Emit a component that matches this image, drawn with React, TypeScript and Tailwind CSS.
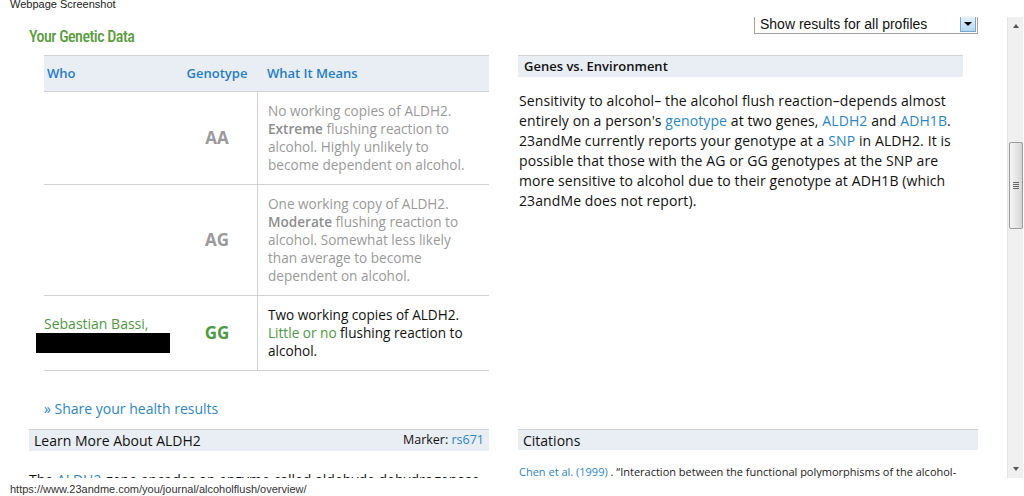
import React from "react";

const body = { fontFamily: '"Open Sans", "Noto Sans", sans-serif' };
const arial = { fontFamily: '"Liberation Sans", Arial, sans-serif' };

const Scrollbar = () => {
  return (
    <div className="w-[16px] mr-[1px] h-full bg-[#f0f0f0] border-l border-[#e4e4e4] flex flex-col items-center">
      <div className="h-[18px] flex items-center justify-center">
        <div className="w-0 h-0 border-l-[3px] border-r-[3px] border-b-[4px] border-l-transparent border-r-transparent border-b-[#555]" />
      </div>
      <div className="h-[107px]" />
      <div className="w-[14px] h-[87px] rounded-[2px] border border-[#9a9a9a] bg-gradient-to-r from-[#f6f6f6] to-[#d6d6d6] flex flex-col items-center justify-center gap-[1px]">
        <div className="w-[6px] h-[1px] bg-[#666]" />
        <div className="w-[6px] h-[1px] bg-[#666]" />
        <div className="w-[6px] h-[1px] bg-[#666]" />
        <div className="w-[6px] h-[1px] bg-[#666]" />
      </div>
      <div className="flex-1" />
      <div className="h-[18px] flex items-center justify-center">
        <div className="w-0 h-0 border-l-[3px] border-r-[3px] border-t-[4px] border-l-transparent border-r-transparent border-t-[#555]" />
      </div>
    </div>
  );
};

const Row = ({
  who,
  genotype,
  genoClass,
  children,
}: {
  who?: React.ReactNode;
  genotype: string;
  genoClass: string;
  children: React.ReactNode;
}) => {
  return (
    <div className="flex border-b border-[#d2d2d2]">
      <div className="w-[133px] flex flex-col justify-center">{who}</div>
      <div className={"w-[80px] flex items-center justify-center text-[17px] font-bold " + genoClass}>
        {genotype}
      </div>
      <div className="flex-1 border-l border-[#d2d2d2] pl-[10px] py-[10px] text-[13.6px] leading-[18px] whitespace-nowrap">
        {children}
      </div>
    </div>
  );
};

const App = () => {
  return (
    <div className="w-[1024px] h-[496px] overflow-hidden bg-white flex flex-col" style={body}>
      <div className="h-[17px] pl-[10px] text-[11px] leading-[10px] -mt-[1px] text-[#222]" style={arial}>
        Webpage Screenshot
      </div>

      <div className="h-[461px] mt-[1px] flex">
        <div className="flex-1 overflow-hidden pl-[29px]">
          <div className="grid grid-cols-[460px_460px] gap-x-[29px]">
            <div>
              <div
                className="pt-[10px] text-[16px] font-medium leading-[20px] text-[#5a9e3e] tracking-[-0.5px]"
                style={{ fontFamily: '"Liberation Sans Narrow", "Roboto", sans-serif', fontStretch: "condensed" }}
              >
                Your Genetic Data
              </div>

              <div className="mt-[8px] ml-[15px] w-[445px]">
                <div className="flex h-[37px] items-center bg-[#e9edf4] border-t border-b border-[#d2d2d2] text-[13px] font-semibold text-[#1f7ec9]">
                  <div className="w-[133px] pl-[3px]">Who</div>
                  <div className="w-[80px] text-center">Genotype</div>
                  <div className="flex-1 pl-[10px]">What It Means</div>
                </div>

                <Row genotype="AA" genoClass="text-[#9a9a9a]">
                  <div className="text-[#9a9a9a]">
                    No working copies of ALDH2.
                    <br />
                    <span className="font-semibold text-[#8e8e8e]">Extreme</span> flushing reaction to
                    <br />
                    alcohol. Highly unlikely to
                    <br />
                    become dependent on alcohol.
                  </div>
                </Row>

                <Row genotype="AG" genoClass="text-[#9a9a9a]">
                  <div className="text-[#9a9a9a]">
                    One working copy of ALDH2.
                    <br />
                    <span className="font-semibold text-[#8e8e8e]">Moderate</span> flushing reaction to
                    <br />
                    alcohol. Somewhat less likely
                    <br />
                    than average to become
                    <br />
                    dependent on alcohol.
                  </div>
                </Row>

                <Row
                  genotype="GG"
                  genoClass="text-[#4e9a42]"
                  who={
                    <div>
                      <div className="text-[14px] leading-[18px] text-[#4e9a42] pt-[2px]">Sebastian Bassi,</div>
                      <div className="-ml-[8px] w-[134px] h-[20px] bg-black" />
                    </div>
                  }
                >
                  <div className="text-[#111]">
                    Two working copies of ALDH2.
                    <br />
                    <span className="text-[#4e9a42]">Little or no</span> flushing reaction to
                    <br />
                    alcohol.
                  </div>
                </Row>
              </div>

              <div className="mt-[29px] ml-[15px] text-[14px] leading-[18px] text-[#2b86c9]">
                » Share your health results
              </div>
            </div>

            <div>
              <div className="-mt-[5px] ml-[236px] h-[22px] border border-[#a3a3a3] flex items-center pt-[2px] pl-[5px] pr-[1px]" style={arial}>
                <div className="flex-1 text-[14px] text-[#111] leading-[18px]">Show results for all profiles</div>
                <div className="w-[16px] h-[16px] border border-[#7aa7cf] bg-gradient-to-b from-[#e4f1fb] to-[#b7d7f0] flex items-center justify-center">
                  <div className="w-0 h-0 border-l-[4px] border-r-[4px] border-t-[4px] border-l-transparent border-r-transparent border-t-black" />
                </div>
              </div>

              <div className="mt-[21px] w-[445px] h-[22px] border-t border-[#d2d2d2] bg-[#e9edf4] pl-[6px] flex items-center text-[13px] font-semibold text-[#111]">
                Genes vs. Environment
              </div>

              <div className="mt-[14px] pl-[1px] text-[14px] leading-[20px] text-[#111] whitespace-nowrap tracking-[0.1px]">
                Sensitivity to alcohol– the alcohol flush reaction–depends almost
                <br />
                entirely on a person's <span className="text-[#2b86c9]">genotype</span> at two genes,{" "}
                <span className="text-[#2b86c9]">ALDH2</span> and <span className="text-[#2b86c9]">ADH1B</span>.
                <br />
                23andMe currently reports your genotype at a <span className="text-[#2b86c9]">SNP</span> in ALDH2. It is
                <br />
                possible that those with the AG or GG genotypes at the SNP are
                <br />
                more sensitive to alcohol due to their genotype at ADH1B (which
                <br />
                23andMe does not report).
              </div>
            </div>
          </div>

          <div className="mt-[11px] grid grid-cols-[460px_460px] gap-x-[29px]">
            <div>
              <div className="h-[22px] border-t border-[#d2d2d2] bg-[#e9edf4] px-[5px] flex items-center justify-between text-[#111]">
                <span className="text-[14px] font-medium">Learn More About ALDH2</span>
                <span className="text-[12.5px]">
                  Marker: <span className="text-[#2b86c9]">rs671</span>
                </span>
              </div>
              <div className="mt-[19px] text-[14px] leading-[20px] text-[#111] whitespace-nowrap">
                The <span className="text-[#2b86c9]">ALDH2</span> gene encodes an enzyme called aldehyde dehydrogenase
              </div>
            </div>
            <div>
              <div className="h-[21px] border-t border-[#d2d2d2] bg-[#e9edf4] pl-[5px] flex items-center text-[14px] font-medium text-[#111]">
                Citations
              </div>
              <div className="mt-[14px] pl-[1px] text-[11px] leading-[16px] text-[#222] whitespace-nowrap">
                <span className="text-[#2b86c9]">Chen et al. (1999)</span> . “Interaction between the functional
                polymorphisms of the alcohol-
              </div>
            </div>
          </div>
        </div>

        <Scrollbar />
      </div>

      <div className="h-[18px] pl-[10px] pt-[2px] text-[11px] leading-[18px] text-[#333]" style={arial}>
        https://www.23andme.com/you/journal/alcoholflush/overview/
      </div>
    </div>
  );
};

export default App;
